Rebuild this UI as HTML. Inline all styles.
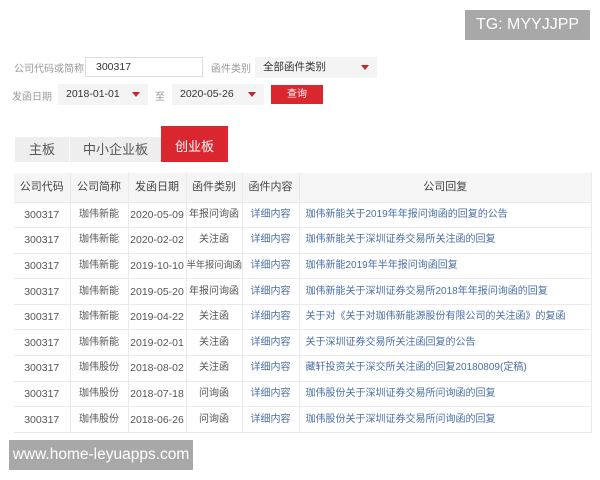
<html><head><style>
body{margin:0;width:600px;height:480px;background:#fff;font-family:"Liberation Sans","Noto Sans CJK SC",sans-serif;position:relative;overflow:hidden;color:#333}
.a{position:absolute}
.lbl{font-size:10px;color:#999}
.sel{background:#f4f4f4;font-size:10.5px;color:#333;box-sizing:border-box;padding-left:8px;line-height:20px}
.tri{position:absolute;right:8px;top:8px;width:0;height:0;border-left:4px solid transparent;border-right:4px solid transparent;border-top:5px solid #c0282f}
table{position:absolute;left:14px;top:173px;width:578px;border-collapse:collapse;font-size:10px;table-layout:fixed}
tr{height:25.6px}
td,th{border-bottom:1px solid #eaeaea;border-right:1px solid #eaeaea;text-align:center;padding:0;white-space:nowrap;line-height:14px;vertical-align:middle;color:#555}
th{background:#f5f5f5;font-weight:normal;font-size:11px;color:#444}
tr.h{height:29px}
td.n{font-size:10.5px}
td.s{font-size:9.5px;letter-spacing:-0.3px}
td.l{text-align:left;padding-left:6px;color:#4a6fa5}
td.b{color:#4a6fa5}
</style></head><body>
<div class="a" style="left:465px;top:10px;width:125px;height:30px;background:#a8a8a8;color:#fff;font-size:16px;line-height:30px;text-align:center">TG: MYYJJPP</div>
<div class="a lbl" style="left:14px;top:60px">公司代码或简称</div>
<div class="a" style="left:85px;top:57px;width:118px;height:20px;border:1px solid #ddd;box-sizing:border-box;font-size:10.5px;line-height:19px;padding-left:10px">300317</div>
<div class="a lbl" style="left:211px;top:60px">函件类别</div>
<div class="a sel" style="left:255px;top:57px;width:122px;height:21px">全部函件类别<span class="tri"></span></div>
<div class="a lbl" style="left:12px;top:88px">发函日期</div>
<div class="a sel" style="left:58px;top:84px;width:90px;height:21px">2018-01-01<span class="tri"></span></div>
<div class="a lbl" style="left:155px;top:88px">至</div>
<div class="a sel" style="left:172px;top:84px;width:92px;height:21px">2020-05-26<span class="tri"></span></div>
<div class="a" style="left:271px;top:85px;width:52px;height:19px;background:#d9262f;color:#fff;font-size:10px;text-align:center;line-height:19px">查询</div>
<div class="a" style="left:15px;top:137px;width:54px;height:25px;background:#eee;font-size:13px;text-align:center;line-height:25px;color:#555">主板</div>
<div class="a" style="left:70px;top:137px;width:91px;height:25px;background:#eee;font-size:13px;text-align:center;line-height:25px;color:#555">中小企业板</div>
<div class="a" style="left:161px;top:126px;width:67px;height:36px;background:#d9262f;font-size:13px;text-align:center;line-height:42px;color:#fff">创业板</div>
<table>
<colgroup><col style="width:56px"><col style="width:58px"><col style="width:58px"><col style="width:56px"><col style="width:57px"><col></colgroup>
<tr class="h"><th>公司代码</th><th>公司简称</th><th>发函日期</th><th>函件类别</th><th>函件内容</th><th>公司回复</th></tr>
<tr><td class="n">300317</td><td>珈伟新能</td><td class="n">2020-05-09</td><td>年报问询函</td><td class="b">详细内容</td><td class="l">珈伟新能关于2019年年报问询函的回复的公告</td></tr>
<tr><td class="n">300317</td><td>珈伟新能</td><td class="n">2020-02-02</td><td>关注函</td><td class="b">详细内容</td><td class="l">珈伟新能关于深圳证券交易所关注函的回复</td></tr>
<tr><td class="n">300317</td><td>珈伟新能</td><td class="n">2019-10-10</td><td class="s">半年报问询函</td><td class="b">详细内容</td><td class="l">珈伟新能2019年半年报问询函回复</td></tr>
<tr><td class="n">300317</td><td>珈伟新能</td><td class="n">2019-05-20</td><td>年报问询函</td><td class="b">详细内容</td><td class="l">珈伟新能关于深圳证券交易所2018年年报问询函的回复</td></tr>
<tr><td class="n">300317</td><td>珈伟新能</td><td class="n">2019-04-22</td><td>关注函</td><td class="b">详细内容</td><td class="l">关于对《关于对珈伟新能源股份有限公司的关注函》的复函</td></tr>
<tr><td class="n">300317</td><td>珈伟新能</td><td class="n">2019-02-01</td><td>关注函</td><td class="b">详细内容</td><td class="l">关于深圳证券交易所关注函回复的公告</td></tr>
<tr><td class="n">300317</td><td>珈伟股份</td><td class="n">2018-08-02</td><td>关注函</td><td class="b">详细内容</td><td class="l">藏轩投资关于深交所关注函的回复20180809(定稿)</td></tr>
<tr><td class="n">300317</td><td>珈伟股份</td><td class="n">2018-07-18</td><td>问询函</td><td class="b">详细内容</td><td class="l">珈伟股份关于深圳证券交易所问询函的回复</td></tr>
<tr><td class="n">300317</td><td>珈伟股份</td><td class="n">2018-06-26</td><td>问询函</td><td class="b">详细内容</td><td class="l">珈伟股份关于深圳证券交易所问询函的回复</td></tr>
</table>
<div class="a" style="left:9px;top:440px;width:184px;height:30px;background:#a8a8a8;color:#fff;font-size:15.5px;line-height:30px;text-align:center">www.home-leyuapps.com</div>
</body></html>
